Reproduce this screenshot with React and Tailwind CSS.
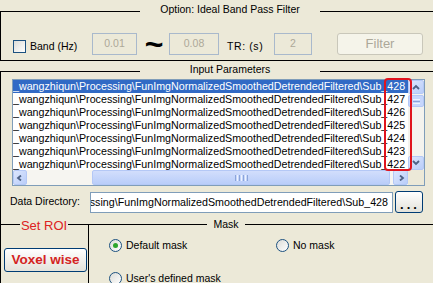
import React from "react";

const rows = [428, 427, 426, 425, 424, 423, 422];
const base = "_wangzhiqun\\Processing\\FunImgNormalizedSmoothedDetrendedFiltered\\Sub_";

function Arrow({ d }) {
  return (
    <svg width="8" height="6" viewBox="0 0 8 6">
      <path d={d} fill="none" stroke="#4D6185" strokeWidth="1.8" />
    </svg>
  );
}

function ScrollBtn({ d, cls }) {
  return (
    <div className={`${cls} rounded-[2px] border border-[#B4C8F6] bg-gradient-to-br from-[#DCE6FD] to-[#B9CDF9] flex items-center justify-center`}>
      <Arrow d={d} />
    </div>
  );
}

function Radio({ checked }) {
  return (
    <div className="w-[13px] h-[13px] rounded-full border border-[#1C5180] bg-gradient-to-br from-[#DCDCD7] to-white flex items-center justify-center">
      {checked ? <div className="w-[5px] h-[5px] rounded-full bg-[#2DA52D]" /> : null}
    </div>
  );
}

export default function App() {
  return (
    <div className="relative w-[433px] h-[283px] overflow-hidden bg-[#ECE9D8] text-black text-[10.5px] [font-family:'Liberation_Sans',Arial,sans-serif]">
      <div className="w-[460px] flex flex-col">
        {/* Option frame header */}
        <div className="flex h-[12px] items-start">
          <div className="w-[140px] h-[12px] border-b border-black" />
          <div className="w-[180px] text-center leading-[12px] pt-[3px] whitespace-nowrap">Option: Ideal Band Pass Filter</div>
          <div className="flex-1 h-[12px] border-b border-black" />
        </div>
        {/* Option frame body */}
        <div className="h-[49px] border-l border-b border-black flex items-start pt-[21px]">
          <div className="ml-[12px] mt-[7px] w-[13px] h-[13px] border border-[#1C5180] bg-gradient-to-br from-[#DCDCD7] to-white" />
          <div className="w-[66px] pl-[4px] mt-[7px] leading-[12px] whitespace-nowrap">Band (Hz)</div>
          <div className="w-[45px] h-[22px] border border-[#A9B9CC] flex items-center justify-center text-[#ACA899] text-[10.5px]">0.01</div>
          <div className="w-[32px] h-[22px] flex items-center justify-center pl-[2px] text-[32px] font-bold leading-none">~</div>
          <div className="w-[50px] h-[22px] border border-[#A9B9CC] flex items-center justify-center text-[#ACA899] text-[10.5px]">0.08</div>
          <div className="w-[55px] pl-[8px] mt-[7px] leading-[12px] whitespace-nowrap tracking-[0.6px]">TR: (s)</div>
          <div className="w-[38px] h-[22px] border border-[#A9B9CC] flex items-center justify-center text-[#ACA899] text-[10.5px]">2</div>
          <div className="ml-[25px] w-[86px] h-[22px] rounded-[3px] border border-[#C9C7BA] bg-[#F5F4EA] text-[#ACA899] text-[13px] flex items-center justify-center">Filter</div>
        </div>
        {/* Input Parameters header */}
        <div className="flex h-[11px] items-start">
          <div className="w-[140px] h-[11px] border-b border-black" />
          <div className="w-[180px] text-center leading-[12px] pt-[2px] whitespace-nowrap">Input Parameters</div>
          <div className="flex-1 h-[11px] border-b border-black" />
        </div>
        <div className="border-l border-black flex flex-col">
          <div className="h-[145px] flex flex-col items-start">
            {/* listbox */}
            <div className="ml-[11px] mt-[7px] w-[413px] h-[107px] border border-[#7F9DB9] bg-white flex flex-col">
              <div className="flex h-[90px]">
                <div className="w-[395px] h-[90px] overflow-hidden text-[10.7px]">
                  {rows.map((n, i) => (
                    <div
                      key={n}
                      className={i === 0 ? "h-[13px] leading-[13px] whitespace-nowrap bg-[#316AC5] text-white" : "h-[13px] leading-[13px] whitespace-nowrap"}
                    >
                      {base + n}
                    </div>
                  ))}
                </div>
                <div className="w-[16px] h-[90px] flex flex-col bg-[#F4F3EE]">
                  <ScrollBtn cls="w-[16px] h-[14px]" d="M1 5 L4 2 L7 5" />
                  <div className="mt-[1px] w-[16px] h-[12px] rounded-[2px] border border-[#B4C8F6] bg-[#C6D6FC] flex flex-col items-center justify-center gap-[1px]">
                    <div className="w-[7px] h-px bg-[#EEF3FE]" />
                    <div className="w-[7px] h-px bg-[#8CA5DA]" />
                    <div className="w-[7px] h-px bg-[#EEF3FE]" />
                  </div>
                  <div className="flex-1" />
                  <ScrollBtn cls="w-[16px] h-[14px]" d="M1 1 L4 4 L7 1" />
                </div>
              </div>
              <div className="flex h-[15px]">
                <div className="w-[395px] h-[15px] flex bg-[#F6F5F1]">
                  <ScrollBtn cls="w-[14px] h-[15px]" d="M5 0.5 L2 3 L5 5.5" />
                  <div className="w-[65px]" />
                  <div className="w-[298px] h-[15px] rounded-[2px] border border-[#B4C8F6] bg-gradient-to-b from-[#D2DEFC] to-[#B9CDF9] flex items-center justify-center gap-[1px]">
                    <div className="w-px h-[6px] bg-[#8CA5DA]" />
                    <div className="w-px h-[6px] bg-[#EEF3FE]" />
                    <div className="w-px h-[6px] bg-[#8CA5DA]" />
                    <div className="w-px h-[6px] bg-[#EEF3FE]" />
                    <div className="w-px h-[6px] bg-[#8CA5DA]" />
                    <div className="w-px h-[6px] bg-[#EEF3FE]" />
                    <div className="w-px h-[6px] bg-[#8CA5DA]" />
                  </div>
                  <div className="flex-1" />
                  <ScrollBtn cls="w-[15px] h-[15px]" d="M3 0.5 L6 3 L3 5.5" />
                </div>
                <div className="w-[16px] h-[15px] bg-[#ECE9D8]" />
              </div>
            </div>
            {/* data directory */}
            <div className="flex items-start mt-[5px]">
              <div className="w-[89px] pl-[9px] h-[22px] flex items-center whitespace-nowrap">Data Directory:</div>
              <div className="mt-[1px] w-[303px] h-[21px] border border-[#7F9DB9] bg-white overflow-hidden flex items-center justify-end pr-[4px] text-[10.7px] whitespace-nowrap">
                ssing\FunImgNormalizedSmoothedDetrendedFiltered\Sub_428
              </div>
              <div className="ml-[2px] w-[28px] h-[22px] rounded-[3px] border border-[#003C74] bg-gradient-to-b from-white to-[#E3E2DA] flex items-center justify-center pt-[5px] pl-[2px] font-bold text-[13px] tracking-[3px]">
                ...
              </div>
            </div>
          </div>
          {/* bottom frames */}
          <div className="flex h-[66px]">
            <div className="w-[88px] flex flex-col">
              <div className="flex h-[8px]">
                <div className="w-[19px] border-b border-black" />
                <div className="w-[48px] text-center text-[13px] leading-[15px] pt-[1px] text-[#DD2222] whitespace-nowrap">Set ROI</div>
                <div className="flex-1 border-b border-black" />
              </div>
              <div className="flex-1 border-r border-black">
                <div className="ml-[3px] mt-[23px] w-[83px] h-[24px] rounded-[3px] border border-[#003C74] bg-gradient-to-b from-white to-[#E3E2DA] flex items-center justify-center text-[#D42323] font-bold text-[13.5px]">
                  Voxel wise
                </div>
              </div>
            </div>
            <div className="flex-1 flex flex-col">
              <div className="flex h-[8px]">
                <div className="w-[118px] border-b border-black" />
                <div className="w-[38px] text-center leading-[15px] whitespace-nowrap">Mask</div>
                <div className="flex-1 border-b border-black" />
              </div>
              <div className="flex flex-col pl-[20px]">
                <div className="flex items-center mt-[13px]">
                  <div className="w-[167px] flex items-center">
                    <Radio checked />
                    <span className="ml-[4px] whitespace-nowrap">Default mask</span>
                  </div>
                  <div className="flex items-center">
                    <Radio />
                    <span className="ml-[4px] whitespace-nowrap">No mask</span>
                  </div>
                </div>
                <div className="flex items-center mt-[17px]">
                  <Radio />
                  <span className="ml-[4px] whitespace-nowrap">User's defined mask</span>
                </div>
              </div>
            </div>
          </div>
        </div>
      </div>
      <div className="absolute left-[384px] top-[78px] w-[28px] h-[93px] border-2 border-[#E0141E] rounded-[4px]" />
    </div>
  );
}
